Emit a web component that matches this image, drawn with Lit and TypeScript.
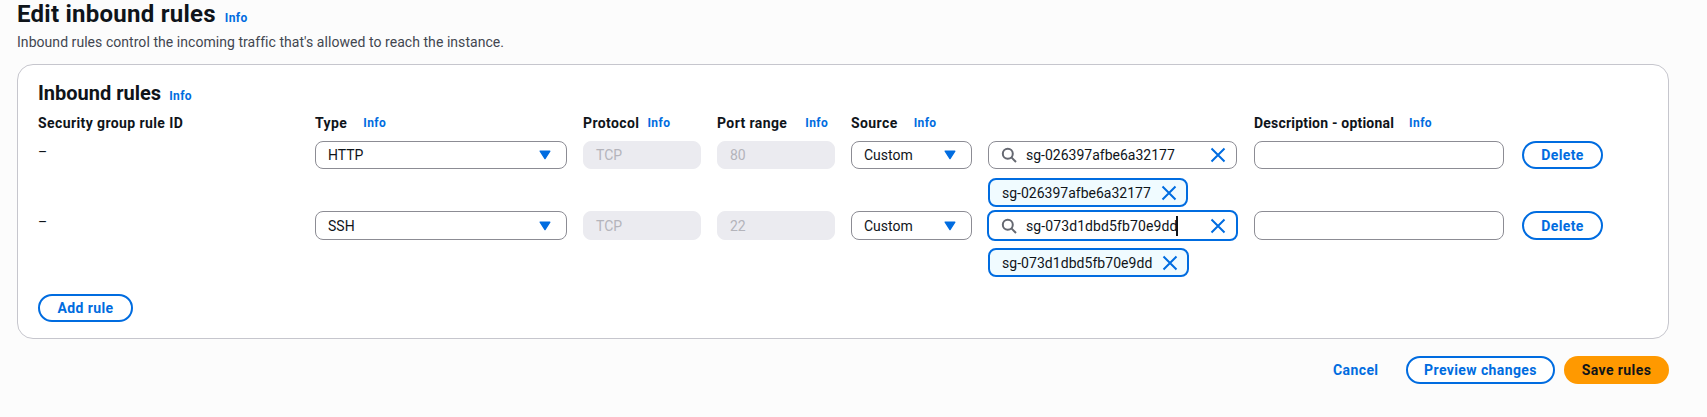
import { LitElement, html, css } from "lit";
import { customElement } from "lit/decorators.js";

interface Rule { type: string; port: string; sg: string; focused: boolean; }
const RULES: Rule[] = [
  { type: "HTTP", port: "80", sg: "sg-026397afbe6a32177", focused: false },
  { type: "SSH", port: "22", sg: "sg-073d1dbd5fb70e9dd", focused: true },
];

const arrow = html`<svg class="arrow" width="12" height="10" viewBox="0 0 12 10"><path d="M1.2 1.2h9.6L6 8.6z" fill="#006ce0" stroke="#006ce0" stroke-width="1.4" stroke-linejoin="round"/></svg>`;
const search = html`<svg class="search" width="16" height="16" viewBox="0 0 16 16" fill="none" stroke="#656871" stroke-width="2"><circle cx="6.8" cy="6.8" r="5"/><path d="M10.4 10.4L15 15"/></svg>`;
const x = html`<svg class="x" width="16" height="16" viewBox="0 0 16 16" fill="none" stroke="#006ce0" stroke-width="2"><path d="M1.5 1.5l13 13M14.5 1.5l-13 13"/></svg>`;

@customElement("app-root")
export class AppRoot extends LitElement {
  static styles = css`
    :host { display: block; width: 1707px; height: 417px; overflow: hidden; background: #fcfcfc; color: #0f141a; font-family: Roboto, "Liberation Sans", sans-serif; font-size: 14px; line-height: 20px; box-sizing: border-box; padding: 0 38px 0 17px; }
    * { box-sizing: border-box; }
    .title-row { display: flex; align-items: baseline; gap: 9px; height: 30px; }
    h1 { margin: 0; font-size: 24px; line-height: 28px; font-weight: 700; letter-spacing: 0.25px; }
    h2 { margin: 0; font-size: 20px; line-height: 24px; font-weight: 700; }
    .info { color: #006ce0; font-size: 12px; font-weight: 700; line-height: 16px; letter-spacing: 0.4px; }
    .sub { margin: 2px 0 0; height: 20px; font-size: 14px; line-height: 20px; color: #424650; letter-spacing: 0.05px; }
    .card { margin-top: 12px; height: 275px; width: 1652px; background: #fff; border: 1px solid #c6c6cd; border-radius: 16px; padding: 16px 20px; }
    .card-title { display: flex; align-items: baseline; gap: 8px; height: 24px; }
    .table { margin-top: 8px; display: grid; grid-template-columns: 261px 252px 118px 118px 121px 250px 250px 83px; column-gap: 16px; }
    .head { display: flex; align-items: center; font-weight: 700; font-size: 14px; line-height: 20px; height: 20px; margin-bottom: 8px; white-space: nowrap; letter-spacing: 0.4px; }
    .head .info { margin-left: 16px; }
    .head.tight .info { margin-left: 8px; }
    .head.port .info { margin-left: 18px; }
    .head.desc { letter-spacing: 0.2px; }
    .head.desc .info { margin-left: 15px; letter-spacing: 0.4px; }
    .cell-dash { padding-top: 1px; line-height: 20px; }
    .ctl { height: 28px; border: 1px solid #8c8c94; border-radius: 8px; background: #fff; display: flex; align-items: center; padding: 0 12px; white-space: nowrap; }
    .ctl.select { justify-content: space-between; padding-right: 15px; }
    .ctl.ro { background: #ebebf0; border-color: #ebebf0; color: #b4b4bb; }
    .ctl.search-box { padding: 0 10px 0 12px; margin-right: 1px; }
    .ctl.search-box .val { margin-left: 9px; flex: 1; }
    .r2 { margin-top: 4px; }
    .ctl.r2 { height: 29px; }
    .ctl.focus { border: 2px solid #006ce0; height: 31px; margin: 3px 0 -1px -1px; padding: 0 10px 0 12px; letter-spacing: 0.1px; }
    .caret { display: inline-block; width: 2px; height: 20px; background: #0f141a; vertical-align: top; margin-left: -1px; }
    .token { margin-top: 9px; height: 29px; border: 2px solid #006ce0; border-radius: 8px; background: #f0fbff; display: inline-flex; align-items: center; gap: 10px; padding: 0 9px 0 12px; white-space: nowrap; justify-self: start; }
    .token.t2 { margin-top: 8px; letter-spacing: 0.05px; }
    .delete-wrap { display: flex; justify-content: flex-end; }
    button { font: inherit; font-weight: 700; line-height: 20px; cursor: pointer; border-radius: 20px; height: 28px; padding: 0; white-space: nowrap; letter-spacing: 0.4px; }
    .btn { background: #fff; border: 2px solid #006ce0; color: #006ce0; }
    .del { width: 81px; }
    .r2 .del { height: 29px; }
    .add { width: 95px; }
    .add-row { margin-top: 17px; }
    .footer { margin-top: 17px; display: flex; justify-content: flex-end; align-items: center; width: 1652px; }
    .cancel { background: none; border: none; color: #006ce0; width: 45px; margin-right: 28px; }
    .preview { width: 149px; margin-right: 9px; }
    .save { width: 105px; background: #ff9900; border: none; color: #0f141a; }
    svg { flex: none; display: block; }
    .span-left { grid-column: 1 / 6; }
    .span-right { grid-column: 7 / 9; }
  `;

  private head(label: string, extra = "") {
    return html`<div class="head ${extra}">${label}<span class="info">Info</span></div>`;
  }

  private row(r: Rule, i: number) {
    const cls = i === 1 ? "r2" : "";
    return html`
      <div class="cell-dash ${cls}">–</div>
      <div class="ctl select ${cls}">${r.type}${arrow}</div>
      <div class="ctl ro ${cls}">TCP</div>
      <div class="ctl ro ${cls}">${r.port}</div>
      <div class="ctl select ${cls}">Custom${arrow}</div>
      <div class="ctl search-box ${r.focused ? "focus" : ""}">${search}<span class="val">${r.sg}${r.focused ? html`<span class="caret"></span>` : ""}</span>${x}</div>
      <div class="ctl ${cls}"></div>
      <div class="delete-wrap ${cls}"><button class="btn del">Delete</button></div>
      <div class="span-left"></div>
      <div class="token ${i === 1 ? "t2" : ""}">${r.sg}${x}</div>
      <div class="span-right"></div>
    `;
  }

  render() {
    return html`
      <div class="title-row"><h1>Edit inbound rules</h1><span class="info">Info</span></div>
      <p class="sub">Inbound rules control the incoming traffic that's allowed to reach the instance.</p>
      <section class="card">
        <div class="card-title"><h2>Inbound rules</h2><span class="info">Info</span></div>
        <div class="table">
          <div class="head">Security group rule ID</div>
          ${this.head("Type")}
          ${this.head("Protocol", "tight")}
          ${this.head("Port range", "port")}
          ${this.head("Source")}
          <div></div>
          ${this.head("Description - optional", "desc")}
          <div></div>
          ${RULES.map((r, i) => this.row(r, i))}
        </div>
        <div class="add-row"><button class="btn add">Add rule</button></div>
      </section>
      <div class="footer">
        <button class="cancel">Cancel</button>
        <button class="btn preview">Preview changes</button>
        <button class="save">Save rules</button>
      </div>
    `;
  }
}
